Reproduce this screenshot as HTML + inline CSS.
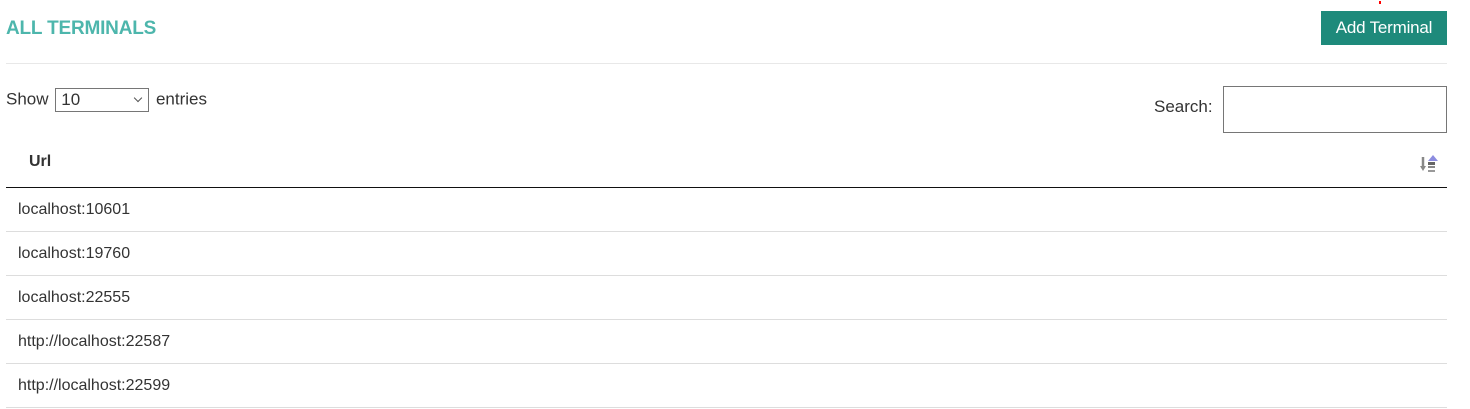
<!DOCTYPE html>
<html><head><meta charset="utf-8"><style>
body{margin:0;width:1470px;height:409px;background:#fff;font-family:"Liberation Sans",sans-serif;color:#333;position:relative;overflow:hidden}
.t{position:absolute;left:6px;top:18px;font-size:19px;font-weight:bold;color:#4db6ac;letter-spacing:-0.2px}
.btn{position:absolute;left:1321px;top:11px;width:126px;height:34px;background:#1e8a7b;color:#fff;font-size:17px;line-height:34px;text-align:center;letter-spacing:-0.2px}
.hr{position:absolute;left:6px;right:23px;top:63px;border-top:1px solid #e8e8e8}
.show{position:absolute;left:6px;top:88px;font-size:17px;line-height:22px}
.sel{display:inline-block;width:94px;height:24px;border:1px solid #767676;vertical-align:middle;box-sizing:border-box;position:relative;padding-left:5px;line-height:22px;margin:0 2px}
.sel:after{content:"";position:absolute;right:7px;top:6px;width:5px;height:5px;border-right:1.5px solid #555;border-bottom:1.5px solid #555;transform:rotate(45deg)}
.search{position:absolute;left:1154px;top:97px;font-size:17px}
.inp{position:absolute;left:1223px;top:86px;width:224px;height:47px;border:1px solid #767676;box-sizing:border-box}
.th{position:absolute;left:29px;top:153px;font-size:16px;font-weight:bold}
.hl{position:absolute;left:6px;right:23px;top:187px;border-top:1px solid #111}
.row{position:absolute;left:6px;right:23px;height:44px;border-bottom:1px solid #ddd;font-size:16px;line-height:44px;padding-left:12px;box-sizing:border-box}
</style></head><body>
<div class="t">ALL TERMINALS</div>
<div class="btn">Add Terminal</div>
<div style="position:absolute;left:1379px;top:1px;width:2px;height:3px;background:red"></div>
<div class="hr"></div>
<div class="show">Show <span class="sel">10</span> entries</div>
<div class="search">Search:</div>
<div class="inp"></div>
<div class="th">Url</div>
<svg style="position:absolute;left:1420px;top:154px" width="20" height="20" viewBox="0 0 20 20">
<path d="M3 3v12" stroke="#888" stroke-width="2.5"/><path d="M0 12l3 5 3-5z" fill="#888"/>
<polygon points="13,1 18,7 8,7" fill="#8c8ce0"/>
<rect x="8" y="8" width="7" height="3" fill="#666"/><rect x="8" y="12" width="7" height="2" fill="#888"/><rect x="8" y="16" width="7" height="2" fill="#999"/>
</svg>
<div class="hl"></div>
<div class="row" style="top:188px">localhost:10601</div>
<div class="row" style="top:232px">localhost:19760</div>
<div class="row" style="top:276px">localhost:22555</div>
<div class="row" style="top:320px">http://localhost:22587</div>
<div class="row" style="top:364px">http://localhost:22599</div>
</body></html>
